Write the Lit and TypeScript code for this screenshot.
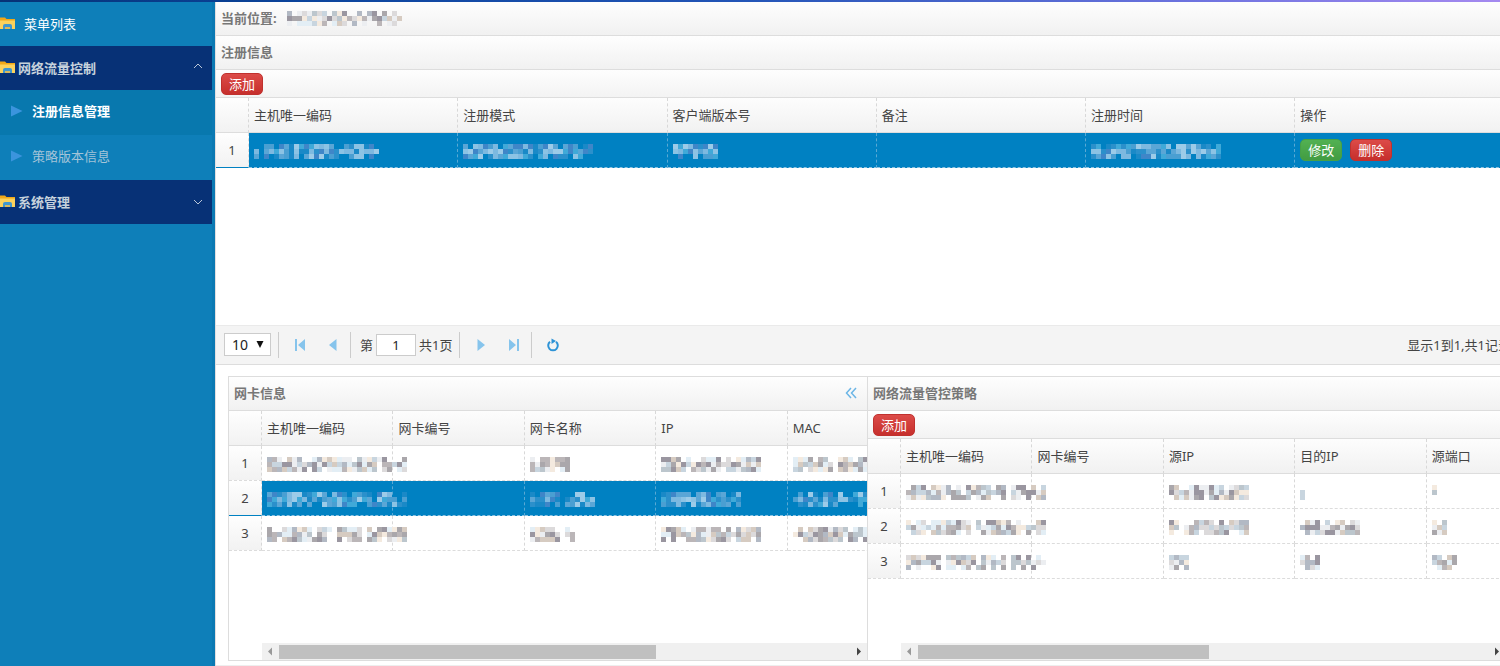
import { LitElement, html, svg, css, nothing, TemplateResult } from "lit";
import { customElement, property } from "lit/decorators.js";
import { classMap } from "lit/directives/class-map.js";

const base = css`
  *, *::before, *::after { box-sizing: border-box; }
  :host { font-family: "Noto Sans", "Noto Sans CJK SC", sans-serif; font-size: 13px; line-height: 20px; color: #444; }
  button, input, select { font: inherit; margin: 0; }
  svg { display: block; }
`;

const light = ["#aaa7ab", "#bbb6b8", "#9a96a0", "#c8d5df", "#d6cbc1", "#eceef1", "#f4eadf", "#b2b9c4", "#dcdadb", "#bcc6cd", "#e3eef5"];
const blue = ["#4a9fd2", "#7db9e0", "#2b90cb", "#9ccbe8", "#1a89c7", "#5aa6d6", "#3f86c8", "#40a9d8", "#8cc3e4"];

/** Pixelated placeholder that masks a private value. */
@customElement("masked-value")
export class MaskedValue extends LitElement {
  @property({ type: Number }) cells = 10;
  @property({ type: Number }) seed = 1;
  @property({ type: Boolean }) dark = false;

  static styles = css`
    :host { display: inline-block; vertical-align: middle; }
    svg { display: block; overflow: visible; }
  `;

  render() {
    let s = this.seed * 7919 + 13;
    const next = () => {
      s = (s * 1103515245 + 12345) % 2147483648;
      return s / 2147483648;
    };
    const palette = this.dark ? blue : light;
    const rects: TemplateResult[] = [];
    for (let x = 0; x < this.cells; x++) {
      const thin = this.cells > 6 && next() < 0.1;
      for (let y = 0; y < 3; y++) {
        const keep = next() < (thin ? 0.25 : y === 1 ? 1 : 0.78);
        const colour = palette[Math.floor(next() * palette.length)];
        if (keep) rects.push(svg`<rect x=${x * 5} y=${y * 5} width="5" height="5" fill=${colour}></rect>`);
      }
    }
    return html`<svg width=${this.cells * 5} height="15" shape-rendering="crispEdges" aria-hidden="true">${rects}</svg>`;
  }
}

const folder = html`<svg width="16" height="14" viewBox="0 0 16 14" aria-hidden="true">
  <path d="M0 0.500h5l1.500 1.500H15V11H0z" fill="#f0a818"></path>
  <path d="M0 3.500h15v8.500H0z" fill="#fbd25c"></path>
  <path d="M3 12V9q0-2 2-2h5q2 0 2 2v3z" fill="#3f97cf"></path>
  <path d="M5 12V10h5v2z" fill="#d9b95c"></path>
</svg>`;

const triangle = html`<svg width="12" height="12" viewBox="0 0 12 12" aria-hidden="true"><path d="M0 0.500 11.500 6 0 11.500z" fill="#3b94dd"></path></svg>`;

@customElement("side-menu")
export class SideMenu extends LitElement {
  static styles = [base, css`
    :host { display: block; background: #0e7fb9; border-right: 3px solid #0b79b3; }
    .title { display: flex; align-items: center; gap: 8px; height: 44px; color: #fff; }
    .group { display: flex; align-items: center; gap: 2px; width: 100%; height: 44px; border: 0; padding: 0 9px 0 0; background: #073176; color: #c6d2dc; font-weight: 700; text-align: left; cursor: pointer; }
    .group span { flex: 1; }
    .group .open { margin-bottom: 4px; }
    ul { list-style: none; margin: 0; padding: 0; }
    .link { display: flex; align-items: center; gap: 9px; height: 45px; padding: 0 0 3px 11px; color: #a3c4d8; text-decoration: none; }
    .current { background: #0878ae; color: #fff; font-weight: 700; }
  `];

  private group(label: string, open: boolean) {
    return html`<button class="group" type="button" aria-expanded=${open ? "true" : "false"}>
      ${folder}<span>${label}</span>
      <svg class=${classMap({ open })} width="10" height="8" viewBox="0 0 10 8" fill="none" stroke="#b9c6d8" aria-hidden="true"><path d=${open ? "M1 6l4-4 4 4" : "M1 2l4 4 4-4"}></path></svg>
    </button>`;
  }

  render() {
    return html`<nav aria-label="菜单列表">
      <div class="title">${folder}<span>菜单列表</span></div>
      ${this.group("网络流量控制", true)}
      <ul>
        <li><a class="link current" href="#register" aria-current="page">${triangle}<span>注册信息管理</span></a></li>
        <li><a class="link" href="#strategy">${triangle}<span>策略版本信息</span></a></li>
      </ul>
      ${this.group("系统管理", false)}
    </nav>`;
  }
}

const buttonStyles = css`
  .btn { height: 22px; padding: 0 7px; border: 1px solid #c0312e; border-radius: 5px; background: linear-gradient(#dc4b48, #c62f2c); color: #fff; line-height: 20px; vertical-align: middle; cursor: pointer; }
  .btn.green { border-color: #46a046; background: linear-gradient(#52b152, #429c42); }
`;

type Cell = number | TemplateResult | null;

@customElement("data-grid")
export class DataGrid extends LitElement {
  @property({ attribute: false }) columns: string[] = [];
  @property({ attribute: false }) rows: Cell[][] = [];
  @property({ type: Number }) selected = -1;
  @property({ type: Number }) seed = 1;
  /** Share of the container width per column; 0 keeps the fixed width. */
  @property({ type: Number }) share = 0;

  static styles = [base, buttonStyles, css`
    :host { display: block; overflow: hidden; }
    table { table-layout: fixed; border-collapse: separate; border-spacing: 0; }
    .number { width: 33px; }
    th, td { height: 35px; padding: 0 0 1px 5px; text-align: left; font-weight: 400; white-space: nowrap; border-right: 1px dashed #d8d8d8; border-bottom: 1px dashed #dcdcdc; }
    th { border-bottom: 1px solid #ddd; }
    thead tr { background: linear-gradient(#fdfdfd, #f1f1f1); }
    .index { padding: 0 0 1px; text-align: center; background: linear-gradient(#fefefe, #f2f2f2); }
    .selected { background: #0081c2; }
    .selected td { border-right-color: #5aa9d4; border-bottom-color: #8fc4e2; }
    .selected .index { border-bottom: 1px solid #0081c2; border-right-color: #ddd; }
    .actions { display: flex; gap: 8px; }
  `];

  render() {
    const width = this.share ? "100%" : `${33 + Math.round(this.columns.length * 131.43)}px`;
    const last = this.columns.length - 1;
    return html`<table style="width:${width}">
      <colgroup>
        <col class="number">
        ${this.columns.map((_, i) => (this.share && i < last ? html`<col style="width:${this.share}%">` : html`<col>`))}
      </colgroup>
      <thead><tr><th class="index"></th>${this.columns.map((c) => html`<th scope="col">${c}</th>`)}</tr></thead>
      <tbody>
        ${this.rows.map((row, r) => html`<tr class=${classMap({ selected: r === this.selected })}>
          <td class="index">${r + 1}</td>
          ${row.map((c, i) => html`<td>${typeof c === "number"
            ? html`<masked-value .cells=${c} .seed=${this.seed + r * 17 + i * 5} .dark=${r === this.selected}></masked-value>`
            : c ?? nothing}</td>`)}
        </tr>`)}
      </tbody>
    </table>`;
  }
}

const pageIcon = (d: string) => html`<svg width="12" height="12" viewBox="0 0 12 12" fill="#86c4ec" aria-hidden="true"><path d=${d}></path></svg>`;

@customElement("app-root")
export class AppRoot extends LitElement {
  static styles = [base, buttonStyles, css`
    :host { display: flex; flex-direction: column; min-height: 100vh; background: #fff; overflow: hidden; }
    .strip { height: 2px; background: linear-gradient(90deg, #063276, #0b449c 20%, #2456b8 50%, #6f74e0 80%, #a58af0); }
    .page { flex: 1; display: grid; grid-template-columns: 215px minmax(0, 1fr); }
    main { display: flex; flex-direction: column; width: calc(100% + 24px); border-left: 1px solid #e2dfe0; }
    .bar { display: flex; align-items: center; gap: 10px; height: 34px; padding: 0 5px 1px; border-bottom: 1px solid #ddd; background: linear-gradient(#fefefe, #f1f1f1); color: #777; font-weight: 700; font-size: 13px; margin: 0; }
    .bar .title { flex: 1; }
    .tools { display: flex; align-items: center; height: 28px; padding: 0 5px; border-bottom: 1px solid #ddd; background: linear-gradient(#fefefe, #f3f3f3); }
    .records { min-height: 227px; }
    .pager { display: flex; align-items: center; height: 40px; padding: 0 5px 1px 8px; background: #f4f4f4; border-top: 1px solid #eaeaea; border-bottom: 1px solid #ddd; }
    .size { position: relative; margin-right: 6px; }
    .size select { appearance: none; display: block; width: 47px; height: 23px; padding: 0 0 0 7px; border: 1px solid #ccc; border-radius: 0; background: #fff; color: #222; font-size: 14px; line-height: 20px; }
    .size svg { position: absolute; right: 7px; top: 8px; pointer-events: none; }
    .sep { width: 1px; height: 26px; margin: 0 4px 0 1px; background: #ccc; }
    .icon { display: grid; place-items: center; width: 33px; height: 26px; padding: 0; border: 0; background: none; cursor: pointer; }
    .jump { display: flex; align-items: center; gap: 3px; padding: 0 6px 0 5px; }
    .jump input { width: 40px; height: 22px; padding: 0; border: 1px solid #ccc; text-align: center; color: #222; }
    .info { margin-left: auto; padding-right: 8px; white-space: nowrap; }
    .panels { flex: 1; display: grid; grid-template-columns: minmax(0, 1fr) minmax(0, 1fr); padding: 11px 18px 4px 12px; border-bottom: 1px solid #eee; }
    .panel { display: flex; flex-direction: column; border: 1px solid #ddd; border-right-width: 0; }
    .panel:last-child { border-right-width: 1px; }
    .panel:first-child .icon { width: 22px; }
    .scroll { display: flex; align-items: center; height: 17px; margin: auto 0 0 33px; background: #f0f0f0; }
    .scroll svg { flex: none; }
    .track { flex: 1; }
    .thumb { height: 14px; background: #c0c0c0; }
  `];

  private scroll(percent: number) {
    return html`<div class="scroll" aria-hidden="true">
      <svg width="17" height="17" viewBox="0 0 17 17"><path d="M10 4.500v8L6 8.500z" fill="#999"></path></svg>
      <div class="track"><div class="thumb" style="width:${percent}%"></div></div>
      <svg width="17" height="17" viewBox="0 0 17 17"><path d="M7 4.500v8l4-4z" fill="#444"></path></svg>
    </div>`;
  }

  render() {
    const actions = html`<div class="actions"><button class="btn green" type="button">修改</button><button class="btn" type="button">删除</button></div>`;
    return html`
      <div class="strip"></div>
      <div class="page">
        <side-menu></side-menu>
        <main>
          <div class="bar"><span>当前位置:</span><masked-value .cells=${23} .seed=${4}></masked-value></div>
          <h2 class="bar">注册信息</h2>
          <div class="tools"><button class="btn" type="button">添加</button></div>
          <data-grid class="records" .share=${16} .seed=${31} .selected=${0}
            .columns=${["主机唯一编码", "注册模式", "客户端版本号", "备注", "注册时间", "操作"]}
            .rows=${[[25, 26, 9, null, 26, actions]]}></data-grid>
          <div class="pager">
            <div class="size">
              <select aria-label="每页条数"><option>10</option></select>
              <svg width="8" height="7" viewBox="0 0 8 7" aria-hidden="true"><path d="M0.500 0h7L4 7z" fill="#111"></path></svg>
            </div>
            <span class="sep"></span>
            <button class="icon" type="button" aria-label="首页">${pageIcon("M1 0h2v12H1zM11 0v12L4 6z")}</button>
            <button class="icon" type="button" aria-label="上一页">${pageIcon("M9.500 0v12L2 6z")}</button>
            <span class="sep"></span>
            <div class="jump"><label for="page">第</label><input id="page" type="text" value="1"><span>共1页</span></div>
            <span class="sep"></span>
            <button class="icon" type="button" aria-label="下一页">${pageIcon("M2.500 0v12L10 6z")}</button>
            <button class="icon" type="button" aria-label="末页">${pageIcon("M1 0v12l7-6zM9 0h2v12H9z")}</button>
            <span class="sep"></span>
            <button class="icon" type="button" aria-label="刷新">
              <svg width="14" height="14" viewBox="0 0 14 14" fill="none" aria-hidden="true"><path d="M4 3.800A4.800 4.800 0 1 0 10 3.800" stroke="#2e93d6" stroke-width="2"></path><path d="M5.500 0.500v5.500L10 3z" fill="#2e93d6"></path></svg>
            </button>
            <span class="info">显示1到1,共1记录</span>
          </div>
          <div class="panels">
            <section class="panel">
              <h2 class="bar"><span class="title">网卡信息</span>
                <button class="icon" type="button" aria-label="折叠">
                  <svg width="12" height="12" viewBox="0 0 12 12" fill="none" stroke="#6bb5e6" stroke-width="1.500" aria-hidden="true"><path d="M6 1 1.500 6 6 11M11 1 6.500 6 11 11"></path></svg>
                </button></h2>
              <data-grid .seed=${90} .selected=${1}
                .columns=${["主机唯一编码", "网卡编号", "网卡名称", "IP", "MAC", "", ""]}
                .rows=${[[28, null, 8, 20, 16, null, null], [28, null, 13, 16, 16, null, null], [28, null, 10, 20, 16, null, null]]}></data-grid>
              ${this.scroll(66)}
            </section>
            <section class="panel">
              <h2 class="bar">网络流量管控策略</h2>
              <div class="tools"><button class="btn" type="button">添加</button></div>
              <data-grid .seed=${150}
                .columns=${["主机唯一编码", "网卡编号", "源IP", "目的IP", "源端口", "", "", "", ""]}
                .rows=${[[28, null, 16, 1, 1, null, null, null, null], [28, null, 16, 12, 3, null, null, null, null], [28, null, 4, 4, 5, null, null, null, null]]}></data-grid>
              ${this.scroll(51)}
            </section>
          </div>
        </main>
      </div>`;
  }
}
